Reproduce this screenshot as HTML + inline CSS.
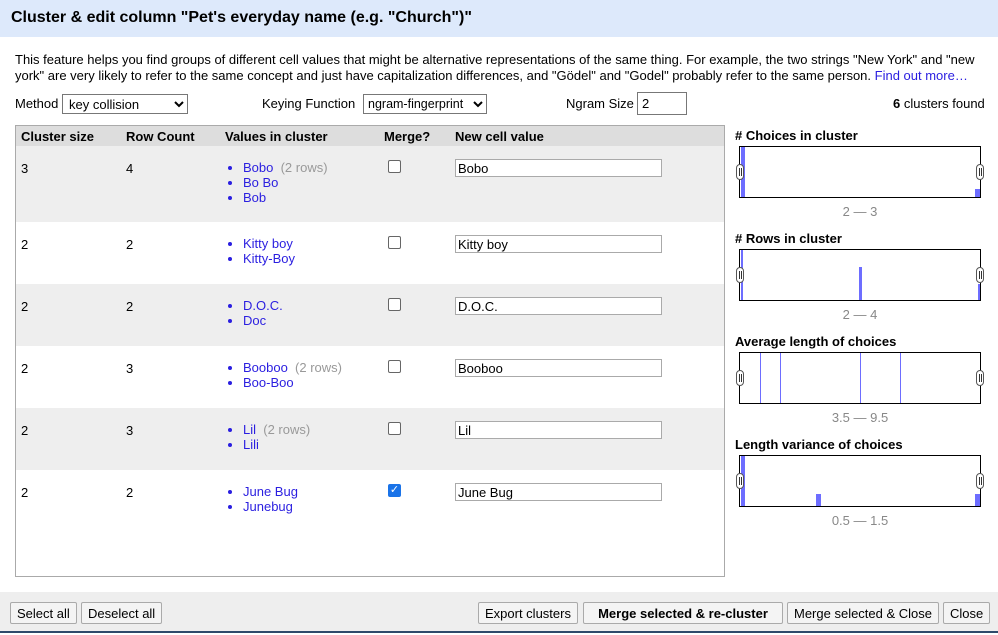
<!DOCTYPE html>
<html><head><style>
*{box-sizing:border-box}
body{margin:0;width:998px;height:635px;position:relative;font-family:"Liberation Sans",sans-serif;font-size:13px;color:#000;background:#fff;overflow:hidden}
.a{position:absolute}
.title{left:0;top:0;width:998px;height:37px;background:#dde9fb;font-weight:bold;font-size:16px;padding:9px 11px}
.desc{left:15px;top:52px;width:980px;line-height:16px;font-size:13px}
.desc span{color:#2a1ee0}
select,.inp{position:absolute;height:20px;border:1px solid #777;font:13px "Liberation Sans",sans-serif;background:#fff;padding:1px 2px}
.tbl{left:15px;top:125px;width:710px;height:452px;border:1px solid #aaa;background:#fff}
.hdr{left:0;top:0;width:708px;height:20px;background:#ddd;font-weight:bold}
.hdr div,.row div{position:absolute}
.row{position:absolute;left:0;width:708px;height:62px}
.g{background:#eee}
ul{margin:0;padding:0 0 0 12px;position:absolute;list-style:disc;line-height:15px}
li{color:#2a1ee0}
li i{font-style:normal;color:#999}
.cb{width:13px;height:13px;border:1px solid #666;border-radius:2px;background:#fff}
.cv{width:207px;height:18px;border:1px solid #aaa;background:#fff;padding:1px 2px}
.hl{font-weight:bold;left:735px}
.box{left:739px;width:242px;height:52px;border:1px solid #000;background:#fff}
.bar{position:absolute;background:#6d6dff;bottom:0}
.rng{left:739px;width:242px;text-align:center;color:#888}
.h{position:absolute;top:17px;width:8px;height:16px;border:1px solid #555;border-radius:4px;background:#fff}
.h:after{content:"";position:absolute;left:2px;top:3px;width:1px;height:8px;border-left:1px solid #333;border-right:1px solid #333}
.foot{left:0;top:592px;width:998px;height:41px;background:#eee;border-bottom:2px solid #2e4a6b}
.btn{position:absolute;top:10px;height:22px;border:1px solid #aaa;border-radius:2px;background:#f4f4f4;padding:3px 6px;font-size:13px}
</style></head><body>
<div class="a title">Cluster &amp; edit column "Pet's everyday name (e.g. "Church")"</div>
<div class="a desc">This feature helps you find groups of different cell values that might be alternative representations of the same thing. For example, the two strings "New York" and "new york" are very likely to refer to the same concept and just have capitalization differences, and "Gödel" and "Godel" probably refer to the same person. <span>Find out more…</span></div>
<div class="a" style="left:15px;top:96px">Method</div>
<select style="left:62px;top:94px;width:126px"><option>key collision</option></select>
<div class="a" style="left:262px;top:96px">Keying Function</div>
<select style="left:363px;top:94px;width:124px;font-size:12.5px;padding:0"><option>ngram-fingerprint</option></select>
<div class="a" style="left:566px;top:96px">Ngram Size</div>
<div class="inp" style="left:637px;top:92px;width:50px;height:23px;padding:3px 4px">2</div>
<div class="a" style="left:893px;top:96px"><b>6</b> clusters found</div>

<div class="a tbl">
<div class="a hdr"><div style="left:5px;top:3px">Cluster size</div><div style="left:110px;top:3px">Row Count</div><div style="left:209px;top:3px">Values in cluster</div><div style="left:368px;top:3px">Merge?</div><div style="left:439px;top:3px">New cell value</div></div>
<div class="row g" style="top:20px;height:76px"><div style="left:5px;top:15px">3</div><div style="left:110px;top:15px">4</div><ul style="left:215px;top:14px"><li>Bobo &nbsp;<i>(2 rows)</i></li><li>Bo Bo</li><li>Bob</li></ul><div class="cb" style="left:372px;top:14px"></div><div class="cv" style="left:439px;top:13px">Bobo</div></div>
<div class="row" style="top:96px"><div style="left:5px;top:15px">2</div><div style="left:110px;top:15px">2</div><ul style="left:215px;top:14px"><li>Kitty boy</li><li>Kitty-Boy</li></ul><div class="cb" style="left:372px;top:14px"></div><div class="cv" style="left:439px;top:13px">Kitty boy</div></div>
<div class="row g" style="top:158px"><div style="left:5px;top:15px">2</div><div style="left:110px;top:15px">2</div><ul style="left:215px;top:14px"><li>D.O.C.</li><li>Doc</li></ul><div class="cb" style="left:372px;top:14px"></div><div class="cv" style="left:439px;top:13px">D.O.C.</div></div>
<div class="row" style="top:220px"><div style="left:5px;top:15px">2</div><div style="left:110px;top:15px">3</div><ul style="left:215px;top:14px"><li>Booboo &nbsp;<i>(2 rows)</i></li><li>Boo-Boo</li></ul><div class="cb" style="left:372px;top:14px"></div><div class="cv" style="left:439px;top:13px">Booboo</div></div>
<div class="row g" style="top:282px"><div style="left:5px;top:15px">2</div><div style="left:110px;top:15px">3</div><ul style="left:215px;top:14px"><li>Lil &nbsp;<i>(2 rows)</i></li><li>Lili</li></ul><div class="cb" style="left:372px;top:14px"></div><div class="cv" style="left:439px;top:13px">Lil</div></div>
<div class="row" style="top:344px"><div style="left:5px;top:15px">2</div><div style="left:110px;top:15px">2</div><ul style="left:215px;top:14px"><li>June Bug</li><li>Junebug</li></ul><div class="cb" style="left:372px;top:14px;background:#1a73e8;border-color:#1a73e8;color:#fff;font-size:11px;line-height:11px;text-align:center">✓</div><div class="cv" style="left:439px;top:13px">June Bug</div></div>
</div>

<div class="a hl" style="top:128px">#&nbsp;Choices in cluster</div>
<div class="a box" style="top:146px"><div class="bar" style="left:1px;width:4px;height:50px"></div><div class="bar" style="right:0;width:5px;height:8px"></div><div class="h" style="left:-4px"></div><div class="h" style="right:-4px"></div></div>
<div class="a rng" style="top:204px">2 — 3</div>
<div class="a hl" style="top:231px">#&nbsp;Rows in cluster</div>
<div class="a box" style="top:249px"><div class="bar" style="left:1px;width:2px;height:50px"></div><div class="bar" style="left:119px;width:3px;height:33px"></div><div class="bar" style="right:0;width:2px;height:16px"></div><div class="h" style="left:-4px"></div><div class="h" style="right:-4px"></div></div>
<div class="a rng" style="top:307px">2 — 4</div>
<div class="a hl" style="top:334px">Average length of choices</div>
<div class="a box" style="top:352px"><div class="bar" style="left:20px;width:1px;height:50px"></div><div class="bar" style="left:40px;width:1px;height:50px"></div><div class="bar" style="left:120px;width:1px;height:50px"></div><div class="bar" style="left:160px;width:1px;height:50px"></div><div class="h" style="left:-4px"></div><div class="h" style="right:-4px"></div></div>
<div class="a rng" style="top:410px">3.5 — 9.5</div>
<div class="a hl" style="top:437px">Length variance of choices</div>
<div class="a box" style="top:455px"><div class="bar" style="left:1px;width:4px;height:50px"></div><div class="bar" style="left:76px;width:5px;height:12px"></div><div class="bar" style="right:0;width:5px;height:12px"></div><div class="h" style="left:-4px"></div><div class="h" style="right:-4px"></div></div>
<div class="a rng" style="top:513px">0.5 — 1.5</div>

<div class="a foot">
<div class="btn" style="left:10px">Select all</div>
<div class="btn" style="left:81px">Deselect all</div>
<div class="btn" style="left:478px">Export clusters</div>
<div class="btn" style="left:583px;width:200px;text-align:center;font-weight:bold">Merge selected &amp; re-cluster</div>
<div class="btn" style="left:787px">Merge selected &amp; Close</div>
<div class="btn" style="left:943px">Close</div>
</div>
</body></html>
